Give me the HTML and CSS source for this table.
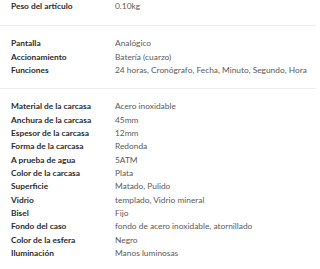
FILE: index.html
```html
<!DOCTYPE html>
<html lang="es">
<head>
<meta charset="utf-8">
<link rel="stylesheet" href="styles.css">
</head>
<body>
<div class="specs">
  <div class="group first">
    <div class="row"><span class="k">Peso del artículo</span><span class="v">0.10kg</span></div>
  </div>
  <div class="group">
    <div class="row"><span class="k">Pantalla</span><span class="v">Analógico</span></div>
    <div class="row"><span class="k">Accionamiento</span><span class="v">Batería (cuarzo)</span></div>
    <div class="row"><span class="k">Funciones</span><span class="v">24 horas, Cronógrafo, Fecha, Minuto, Segundo, Hora</span></div>
  </div>
  <div class="group last">
    <div class="row"><span class="k">Material de la carcasa</span><span class="v">Acero inoxidable</span></div>
    <div class="row"><span class="k">Anchura de la carcasa</span><span class="v">45mm</span></div>
    <div class="row"><span class="k">Espesor de la carcasa</span><span class="v">12mm</span></div>
    <div class="row"><span class="k">Forma de la carcasa</span><span class="v">Redonda</span></div>
    <div class="row"><span class="k">A prueba de agua</span><span class="v">5ATM</span></div>
    <div class="row"><span class="k">Color de la carcasa</span><span class="v">Plata</span></div>
    <div class="row"><span class="k">Superficie</span><span class="v">Matado, Pulido</span></div>
    <div class="row"><span class="k">Vidrio</span><span class="v">templado, Vidrio mineral</span></div>
    <div class="row"><span class="k">Bisel</span><span class="v">Fijo</span></div>
    <div class="row"><span class="k">Fondo del caso</span><span class="v">fondo de acero inoxidable, atornillado</span></div>
    <div class="row"><span class="k">Color de la esfera</span><span class="v">Negro</span></div>
    <div class="row"><span class="k">Iluminación</span><span class="v">Manos luminosas</span></div>
  </div>
</div>
</body>
</html>
```
FILE: styles.css
```css
html, body {
  margin: 0;
  padding: 0;
  background: #ffffff;
}
body {
  font-family: Lato, "Open Sans", sans-serif;
  font-size: 8.35px;
  width: 320px;
  overflow: hidden;
}
.specs {
  width: 316px;
}
.group {
  padding: 11px 0 11px 0;
  border-bottom: 1px solid #ececec;
}
.group.first {
  padding-top: 0;
  padding-bottom: 12px;
}
.group.last {
  border-bottom: none;
}
.row {
  display: grid;
  grid-template-columns: 104px 1fr;
  height: 13.35px;
  line-height: 13.35px;
  padding-left: 11px;
  white-space: nowrap;
}
.k {
  color: #2b2b2b;
  font-weight: 700;
}
.v {
  color: #5a5a5a;
}
```
